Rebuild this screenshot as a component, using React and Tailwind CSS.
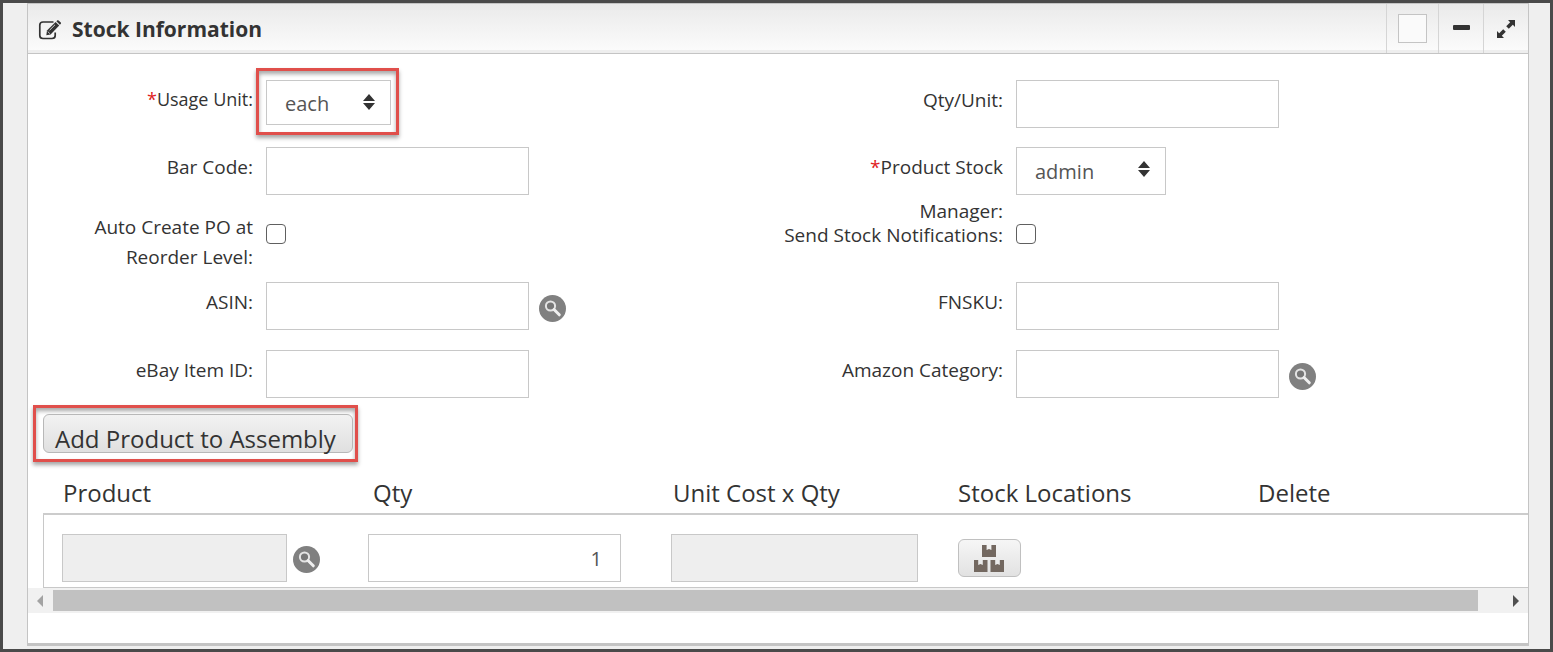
import React, { useState } from 'react';

const inputClass = 'h-12 w-[263px] border border-[#c8c8c8] bg-white px-3 text-xl text-[#555]';

const EditIcon = () => (
  <svg viewBox="0 0 24 20" className="h-5 w-6" fill="none" aria-hidden="true">
    <path d="M15.5 2H5Q1.8 2 1.8 5V15.5Q1.8 18.5 5 18.5H14Q17.2 18.5 17.2 15.5V12.5" stroke="#333" strokeWidth="1.7" />
    <path d="M8.3 15.2L9 10.6L17.6 2L21.2 5.6L12.6 14.6Z" fill="#333" />
    <path d="M18.4 1.2L19.4 0.3Q20 -0.1 20.6 0.5L22.8 2.6Q23.3 3.2 22.8 3.8L21.9 4.8Z" fill="#333" />
    <path d="M11.6 10.2L17 4.8M9.7 11.5L11.8 13.6" stroke="#f5f5f5" strokeWidth="0.8" />
  </svg>
);

const SearchIcon = () => (
  <svg viewBox="0 0 27 27" className="size-[27px]" fill="none" aria-hidden="true">
    <circle cx="13.5" cy="13.5" r="13.5" fill="#808080" />
    <circle cx="11.5" cy="11" r="4.6" fill="#777" stroke="#e4e4e4" strokeWidth="2" />
    <path d="M15 14.5L20.3 19.8" stroke="#efefef" strokeWidth="3" strokeLinecap="round" />
  </svg>
);

const ExpandIcon = () => (
  <svg viewBox="0 0 20 20" className="size-5" aria-hidden="true">
    <path d="M12 1H19V8L16.8 5.8L12.8 9.8L10.2 7.2L14.2 3.2Z" fill="#333" />
    <path d="M8 19H1V12L3.2 14.2L7.2 10.2L9.8 12.8L5.8 16.8Z" fill="#333" />
  </svg>
);

const BoxesIcon = () => (
  <svg viewBox="0 0 30 27" className="h-[27px] w-[30px]" fill="#736860" aria-hidden="true">
    <path d="M8 0H12.6V5L15 4L17.4 5V0H22V12H8Z" />
    <path d="M0 15H4.2V20L6.5 19L8.8 20V15H13.5V27H0Z" />
    <path d="M16.5 15H21.2V20L23.5 19L25.8 20V15H30V27H16.5Z" />
  </svg>
);

const SearchButton = ({ label, className = '' }) => (
  <button type="button" aria-label={label} className={`shrink-0 ${className}`}>
    <SearchIcon />
  </button>
);

const Field = ({ id, label, required, labelClass = 'pl-12 text-[19px] leading-[44px]', children }) => (
  <div className="flex items-start gap-[13px]">
    <label htmlFor={id} className={`w-[30%] shrink-0 text-right ${labelClass}`}>
      {required && <span className="text-[#e02222]">*</span>}
      {label}
    </label>
    {children}
  </div>
);

const SelectBox = ({ id, options, className }) => (
  <div className={`relative ${className}`}>
    <select id={id} className="size-full appearance-none border border-[#c8c8c8] bg-white pt-[2px] pl-[18px] text-xl text-[#555]">
      {options.map((option) => (
        <option key={option}>{option}</option>
      ))}
    </select>
    <svg viewBox="0 0 12 16" className="pointer-events-none absolute top-[14px] right-4 h-4 w-3" fill="#333" aria-hidden="true">
      <path d="M6 0L12 7H0ZM0 9H12L6 16Z" />
    </svg>
  </div>
);

const Checkbox = ({ id }) => (
  <input
    id={id}
    type="checkbox"
    className="mt-3 size-5 appearance-none rounded-[4px] border border-[#606060] bg-white checked:bg-[#767676]"
  />
);

const StockForm = () => (
  <div className="pt-6">
    <div className="grid h-[67px] grid-cols-2">
      <Field id="usage-unit" label="Usage Unit:" required labelClass="text-lg leading-[43px]">
        <div className="-mt-[10px] -ml-[10px] border-3 border-[#e04f4b] p-[7px] pt-[9px] pr-[5px] shadow-[0_3px_4px_rgba(0,0,0,0.35),inset_0_3px_4px_rgba(0,0,0,0.35)]">
          <SelectBox id="usage-unit" options={['each', 'case', 'pack']} className="h-[45px] w-[125px]" />
        </div>
      </Field>
      <Field id="qty-unit" label="Qty/Unit:">
        <input id="qty-unit" type="text" className={`mt-[2px] ${inputClass}`} />
      </Field>
    </div>
    <div className="grid h-[67px] grid-cols-2">
      <Field id="bar-code" label="Bar Code:">
        <input id="bar-code" type="text" className={`mt-[2px] ${inputClass}`} />
      </Field>
      <Field id="stock-manager" label="Product Stock Manager:" required>
        <SelectBox id="stock-manager" options={['admin']} className="mt-[2px] h-12 w-[150px]" />
      </Field>
    </div>
    <div className="grid h-[68px] grid-cols-2">
      <Field id="auto-po" label="Auto Create PO at Reorder Level:" labelClass="pl-12 text-[19px] leading-[30px]">
        <Checkbox id="auto-po" />
      </Field>
      <Field id="notifications" label="Send Stock Notifications:" labelClass="text-[19px] leading-[46px] whitespace-nowrap">
        <Checkbox id="notifications" />
      </Field>
    </div>
    <div className="grid h-[68px] grid-cols-2">
      <Field id="asin" label="ASIN:">
        <div className="mt-[2px] flex items-center gap-[10px]">
          <input id="asin" type="text" className={inputClass} />
          <SearchButton label="Search ASIN" className="mt-1" />
        </div>
      </Field>
      <Field id="fnsku" label="FNSKU:">
        <input id="fnsku" type="text" className={`mt-[2px] ${inputClass}`} />
      </Field>
    </div>
    <div className="grid grid-cols-2">
      <Field id="ebay-id" label="eBay Item ID:">
        <input id="ebay-id" type="text" className={`mt-[2px] ${inputClass}`} />
      </Field>
      <Field id="amazon-category" label="Amazon Category:">
        <div className="mt-[2px] flex items-center gap-[10px]">
          <input id="amazon-category" type="text" className={inputClass} />
          <SearchButton label="Search Amazon category" className="mt-1" />
        </div>
      </Field>
    </div>
  </div>
);

const AssemblyTable = () => {
  const [qty, setQty] = useState('1');

  return (
    <div className="overflow-hidden pl-[15px]">
      <table className="w-full table-fixed border-separate border-spacing-0 text-left">
        <colgroup>
          <col className="w-[325px]" />
          <col className="w-[303px]" />
          <col className="w-[287px]" />
          <col className="w-[300px]" />
          <col />
        </colgroup>
        <thead>
          <tr className="h-[53px] text-2xl leading-[30px]">
            <th className="border-b-2 border-[#ccc] pt-[10px] pl-5 font-normal">Product</th>
            <th className="border-b-2 border-[#ccc] pt-[10px] pl-[5px] font-normal">Qty</th>
            <th className="border-b-2 border-[#ccc] pt-[10px] pl-[2px] font-normal">Unit Cost x Qty</th>
            <th className="border-b-2 border-[#ccc] pt-[10px] font-normal">Stock Locations</th>
            <th className="border-b-2 border-[#ccc] pt-[10px] font-normal">Delete</th>
          </tr>
        </thead>
        <tbody>
          <tr className="h-[73px]">
            <td className="border-b border-l border-[#c8c8c8] pt-[14px] pl-[18px]">
              <div className="flex items-center gap-[6px]">
                <input type="text" readOnly aria-label="Product" className="h-12 w-[225px] border border-[#c8c8c8] bg-[#eee] px-3 text-xl" />
                <SearchButton label="Search product" className="mt-[2px]" />
              </div>
            </td>
            <td className="border-b border-[#c8c8c8] pt-[14px]">
              <input
                type="text"
                aria-label="Quantity"
                value={qty}
                onChange={(e) => setQty(e.target.value)}
                className="block h-12 w-[253px] border border-[#c8c8c8] pr-[18px] text-right text-xl text-[#555]"
              />
            </td>
            <td className="border-b border-[#c8c8c8] pt-[14px]">
              <input type="text" readOnly aria-label="Unit cost x quantity" className="block h-12 w-[247px] border border-[#c8c8c8] bg-[#eee] px-3 text-xl" />
            </td>
            <td className="border-b border-[#c8c8c8] pt-[14px]">
              <button
                type="button"
                aria-label="Stock locations"
                className="flex h-[38px] w-[63px] items-center rounded-md border border-[#c0c0c0] bg-linear-to-b from-[#f6f6f6] to-[#e2e2e2] pl-[15px]"
              >
                <BoxesIcon />
              </button>
            </td>
            <td className="border-b border-[#c8c8c8]"></td>
          </tr>
        </tbody>
      </table>
    </div>
  );
};

const ScrollBar = () => (
  <div className="flex h-[25px] items-center bg-[#f1f1f1]">
    <div className="flex w-[25px] pl-[9px]">
      <svg viewBox="0 0 6 12" className="h-3 w-[6px]" fill="#a3a3a3" aria-hidden="true">
        <path d="M6 0V12L0 6Z" />
      </svg>
    </div>
    <div className="flex-1 pr-[25px]">
      <div className="h-[21px] bg-[#c1c1c1]"></div>
    </div>
    <div className="flex w-[25px] justify-center">
      <svg viewBox="0 0 6 12" className="h-3 w-[6px]" fill="#505050" aria-hidden="true">
        <path d="M0 0V12L6 6Z" />
      </svg>
    </div>
  </div>
);

const App = () => {
  return (
    <div className="min-h-screen border-3 border-[#4a4a4a] bg-[#efefef] pr-[21px] pb-[3px] pl-6 font-['Open_Sans',sans-serif] text-[#333]">
      <section className="border border-b-3 border-[#c4c4c4] bg-white pb-[30px]">
        <header className="flex h-[50px] items-stretch border-b border-[#c4c4c4] bg-linear-to-b from-[#eaeaea] to-[#fcfcfc] shadow-[inset_0_-3px_0_#eeeeee]">
          <h1 className="flex flex-1 items-center gap-[10px] pt-[2px] pl-[10px] text-[21px] font-bold">
            <EditIcon />
            Stock Information
          </h1>
          <div className="flex w-[52px] items-center justify-center border-l border-[#d5d5d5]">
            <input type="checkbox" aria-label="Select panel" className="size-[29px] appearance-none border border-[#c4c4c4] bg-[#fafafa] checked:bg-[#999]" />
          </div>
          <button type="button" aria-label="Collapse" className="flex w-[45px] items-center justify-center border-l border-[#d5d5d5] pb-[2px]">
            <span className="h-[5px] w-[17px] rounded-[1px] bg-[#333]"></span>
          </button>
          <button type="button" aria-label="Expand" className="flex w-[45px] items-center justify-center border-l border-[#d5d5d5]">
            <ExpandIcon />
          </button>
        </header>
        <StockForm />
        <div className="flex pt-[7px] pl-[5px]">
          <div className="border-3 border-[#e04f4b] px-[7px] py-[6px] pr-[2px] shadow-[0_3px_4px_rgba(0,0,0,0.35),inset_0_3px_4px_rgba(0,0,0,0.35)]">
            <button
              type="button"
              className="block h-[39px] w-[310px] rounded-md border border-[#b8b8b8] bg-linear-to-b from-[#f2f2f2] to-[#e0e0e0] pt-[11px] pl-[11px] text-left text-2xl leading-[26px] whitespace-nowrap"
            >
              Add Product to Assembly
            </button>
          </div>
        </div>
        <AssemblyTable />
        <ScrollBar />
      </section>
    </div>
  );
};

export default App;
